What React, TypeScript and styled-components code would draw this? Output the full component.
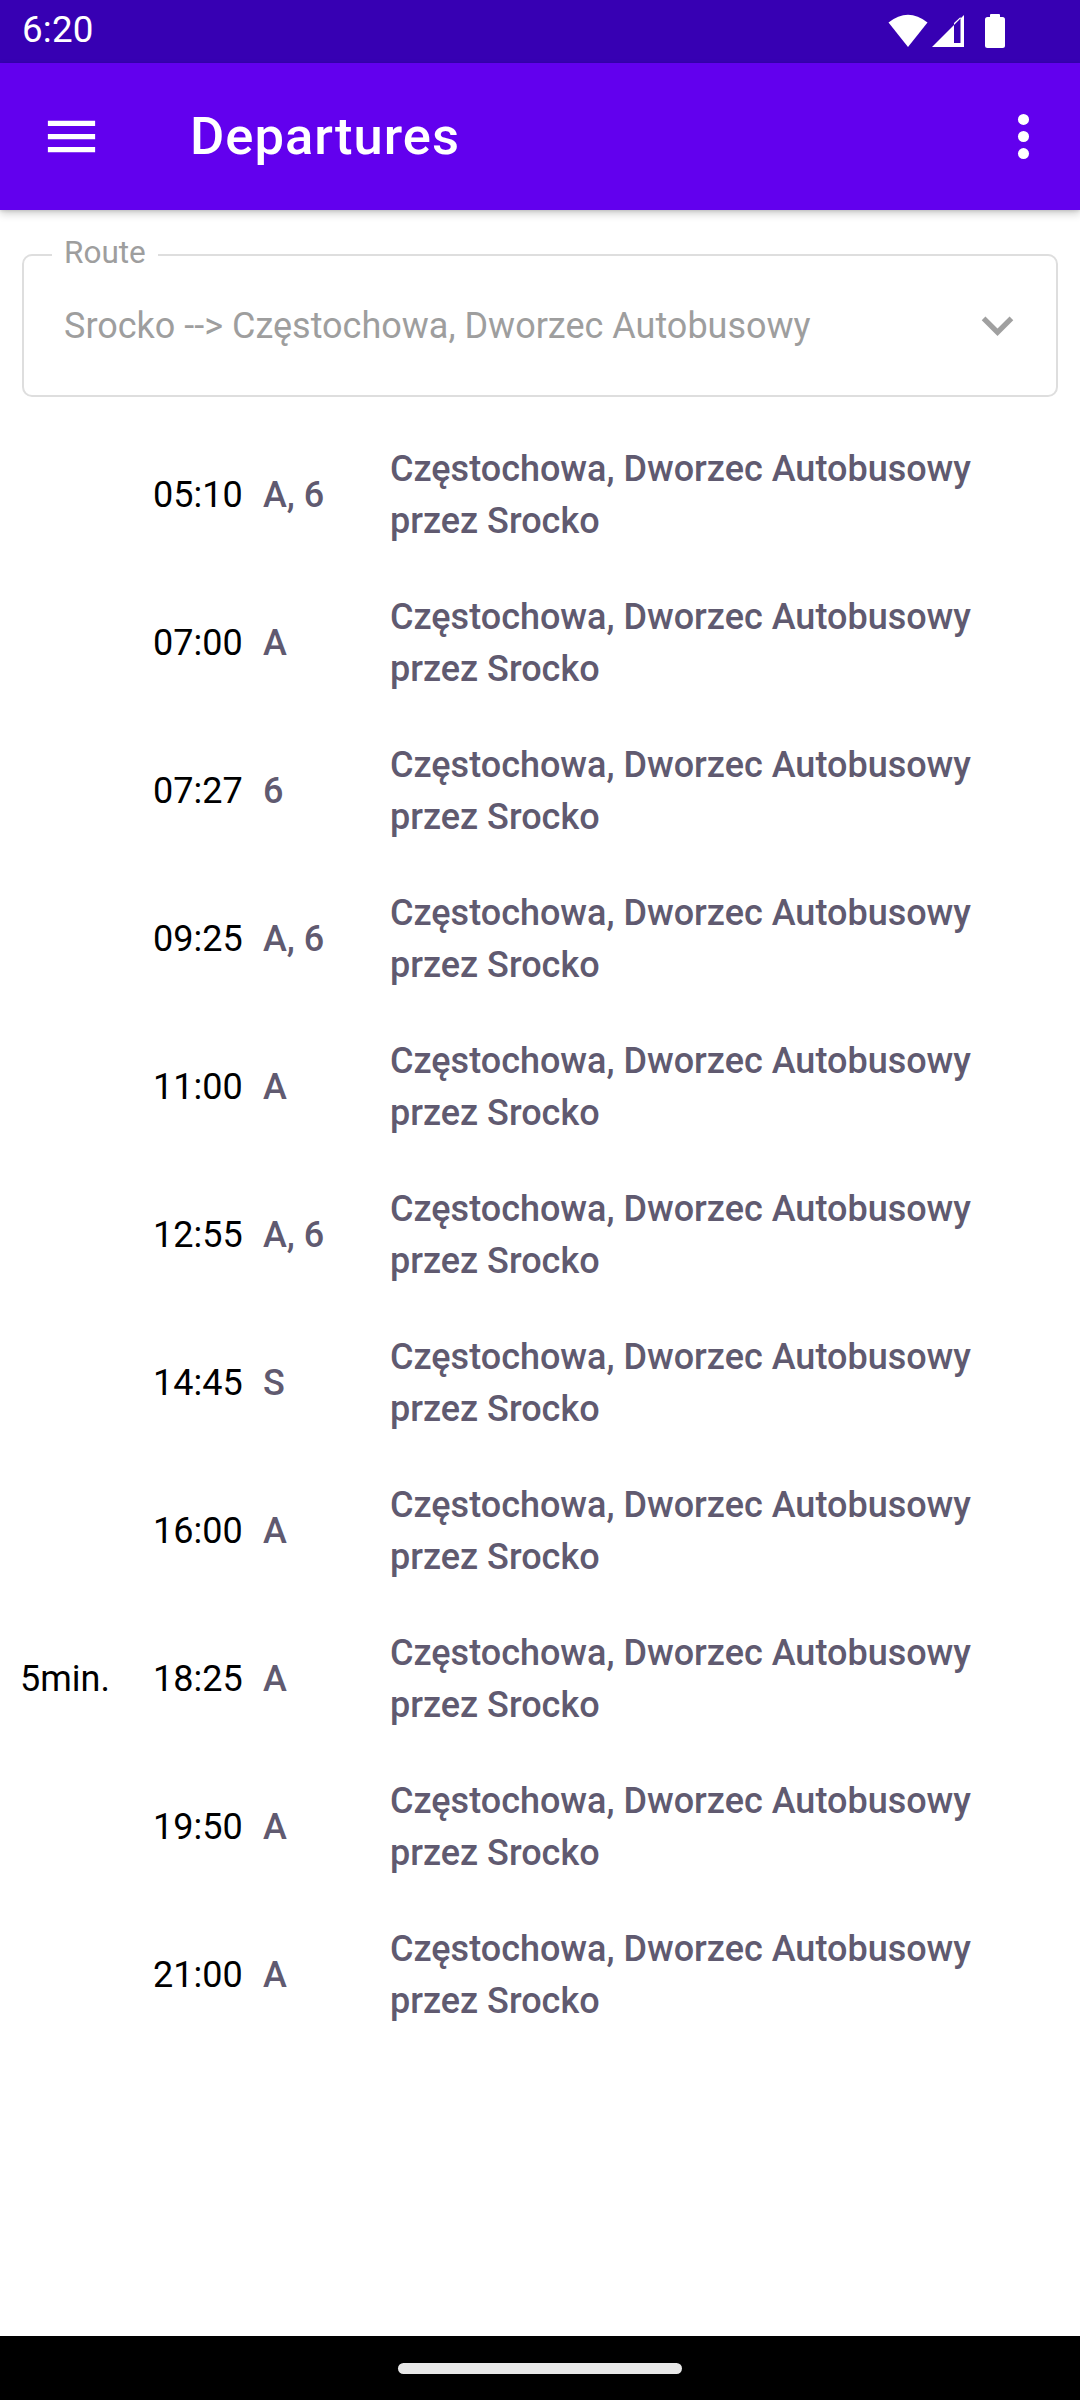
import React from "react";
import styled, { createGlobalStyle } from "styled-components";

const GlobalStyle = createGlobalStyle`
  html, body { margin: 0; padding: 0; background: #ffffff; }
  body { font-family: Roboto, "Noto Sans", "Liberation Sans", sans-serif; -webkit-font-smoothing: antialiased; }
  * { box-sizing: border-box; }
`;

const Screen = styled.div`
  width: 1080px;
  height: 2400px;
  display: flex;
  flex-direction: column;
  background: #ffffff;
  overflow: hidden;
`;

const StatusBar = styled.div`
  height: 63px;
  flex: 0 0 63px;
  background: #3700b3;
  display: flex;
  align-items: center;
  justify-content: space-between;
  padding: 0 74px 0 22px;
  color: #ffffff;
`;

const Clock = styled.span`
  font-size: 36.75px;
  font-weight: 400;
  line-height: 1;
  letter-spacing: 0.2px;
  margin-top: -3px;
`;

const StatusIcons = styled.div`
  display: flex;
  align-items: center;
  gap: 3px;
  margin-top: -1px;
`;

const AppBar = styled.header`
  height: 147px;
  flex: 0 0 147px;
  background: #6200ee;
  display: flex;
  align-items: center;
  padding: 0 25px 0 40px;
  position: relative;
  z-index: 2;
  box-shadow: 0 4px 8px rgba(0, 0, 0, 0.18), 0 1px 3px rgba(0, 0, 0, 0.12);
`;

const IconButton = styled.div`
  width: 63px;
  height: 63px;
  display: flex;
  align-items: center;
  justify-content: center;
  color: #ffffff;
`;

const Title = styled.h1`
  margin: 0 0 0 87px;
  flex: 1;
  font-size: 52.5px;
  font-weight: 500;
  color: #ffffff;
  letter-spacing: 1px;
  line-height: 1;
`;

const Content = styled.main`
  flex: 1;
  display: flex;
  flex-direction: column;
  padding: 44px 22px 0 22px;
`;

const Field = styled.div`
  position: relative;
  height: 143px;
  border: 2.5px solid #dedede;
  border-radius: 10px;
  display: flex;
  align-items: center;
  padding: 0 27px 0 40px;
`;

const FieldLabel = styled.span`
  position: absolute;
  top: -21px;
  left: 28px;
  padding: 0 12px;
  background: #ffffff;
  font-size: 31.5px;
  line-height: 36px;
  color: #9e9e9e;
  letter-spacing: 0;
`;

const FieldValue = styled.span`
  flex: 1;
  font-size: 36px;
  color: #9e9e9e;
  letter-spacing: 0;
  white-space: nowrap;
  overflow: hidden;
`;

const List = styled.div`
  display: flex;
  flex-direction: column;
  margin: 24px -22px 0 -22px;
`;

const Row = styled.div`
  height: 148px;
  display: grid;
  grid-template-columns: 133px 110px 127px 1fr;
  align-items: center;
  padding: 0 22px 0 20px;
`;

const Eta = styled.span`
  font-size: 36px;
  color: #000000;
`;

const Time = styled.span`
  font-size: 36px;
  color: #000000;
`;

const Lines = styled.span`
  font-size: 36px;
  font-weight: 500;
  color: #605a70;
`;

const Destination = styled.div`
  display: flex;
  flex-direction: column;
  font-size: 36px;
  font-weight: 500;
  line-height: 52px;
  color: #605a70;
`;

const NavBar = styled.div`
  height: 64px;
  flex: 0 0 64px;
  background: #000000;
  display: flex;
  align-items: center;
  justify-content: center;
`;

const Handle = styled.div`
  width: 284px;
  height: 11px;
  border-radius: 6px;
  background: #e8e8e8;
`;

type Departure = { time: string; lines: string; eta?: string };

const departures: Departure[] = [
  { time: "05:10", lines: "A, 6" },
  { time: "07:00", lines: "A" },
  { time: "07:27", lines: "6" },
  { time: "09:25", lines: "A, 6" },
  { time: "11:00", lines: "A" },
  { time: "12:55", lines: "A, 6" },
  { time: "14:45", lines: "S" },
  { time: "16:00", lines: "A" },
  { time: "18:25", lines: "A", eta: "5min." },
  { time: "19:50", lines: "A" },
  { time: "21:00", lines: "A" },
];

const WifiIcon = () => (
  <svg width="40" height="34" viewBox="0 0 40 34">
    <path d="M20 33 L0.5 8.5 Q20 -7 39.5 8.5 Z" fill="#ffffff" />
  </svg>
);

const SignalIcon = () => (
  <svg width="34" height="34" viewBox="0 0 34 34">
    <path
      fillRule="evenodd"
      d="M1 33 L33 1 L33 33 Z M23 9 L23 29 L29.5 29 L29.5 3 Z"
      fill="#ffffff"
    />
  </svg>
);

const BatteryIcon = () => (
  <svg width="22" height="36" viewBox="0 0 22 36" style={{ marginLeft: 16 }}>
    <rect x="6" y="1" width="10" height="5" rx="1" fill="#ffffff" />
    <rect x="1" y="4" width="20" height="31" rx="2.5" fill="#ffffff" />
  </svg>
);

const MenuIcon = () => (
  <svg width="63" height="63" viewBox="0 0 24 24" fill="#ffffff">
    <path d="M3 18h18v-2H3v2zm0-5h18v-2H3v2zm0-7v2h18V6H3z" />
  </svg>
);

const MoreIcon = () => (
  <svg width="63" height="63" viewBox="0 0 24 24" fill="#ffffff">
    <circle cx="12" cy="5.5" r="2.1" />
    <circle cx="12" cy="12" r="2.1" />
    <circle cx="12" cy="18.5" r="2.1" />
  </svg>
);

const ChevronIcon = () => (
  <svg width="63" height="63" viewBox="0 0 24 24" fill="#a0a0a0">
    <path d="M16.59 8.59L12 13.17 7.41 8.59 6 10l6 6 6-6z" />
  </svg>
);

export default function App() {
  return (
    <>
      <GlobalStyle />
      <Screen>
        <StatusBar>
          <Clock>6:20</Clock>
          <StatusIcons>
            <WifiIcon />
            <SignalIcon />
            <BatteryIcon />
          </StatusIcons>
        </StatusBar>
        <AppBar>
          <IconButton>
            <MenuIcon />
          </IconButton>
          <Title>Departures</Title>
          <IconButton>
            <MoreIcon />
          </IconButton>
        </AppBar>
        <Content>
          <Field>
            <FieldLabel>Route</FieldLabel>
            <FieldValue>Srocko --&gt; Częstochowa, Dworzec Autobusowy</FieldValue>
            <ChevronIcon />
          </Field>
          <List>
            {departures.map((d) => (
              <Row key={d.time}>
                <Eta>{d.eta ?? ""}</Eta>
                <Time>{d.time}</Time>
                <Lines>{d.lines}</Lines>
                <Destination>
                  <span>Częstochowa, Dworzec Autobusowy</span>
                  <span>przez Srocko</span>
                </Destination>
              </Row>
            ))}
          </List>
        </Content>
        <NavBar>
          <Handle />
        </NavBar>
      </Screen>
    </>
  );
}
